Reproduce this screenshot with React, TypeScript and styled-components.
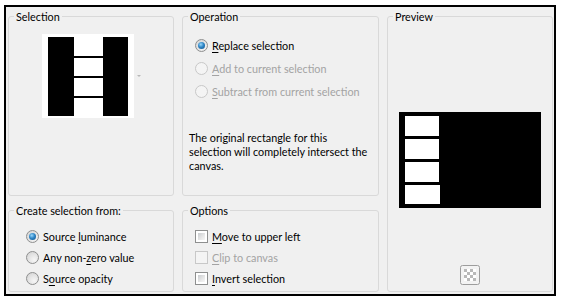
import React from 'react';
import styled, { createGlobalStyle, css } from 'styled-components';

const GlobalStyle = createGlobalStyle`
  html, body {
    margin: 0;
    padding: 0;
    background: #ffffff;
  }
  body {
    font-family: Lato, "Liberation Sans", sans-serif;
    font-size: 10.8px;
    color: #000;
  }
`;

const Frame = styled.div`
  box-sizing: border-box;
  margin: 5px 0 0 4px;
  width: 552px;
  height: 291px;
  border: 2px solid #000;
  background: #f0f0f0;
  padding: 2px 0 0 2px;
  display: grid;
  grid-template-columns: 166px 197px 166px;
  grid-template-rows: 187px 89px;
  column-gap: 8px;
  row-gap: 7px;
`;

const Group = styled.fieldset<{ $col: number; $row: string }>`
  grid-column: ${(p) => p.$col};
  grid-row: ${(p) => p.$row};
  margin: 0;
  padding: 0;
  min-width: 0;
  border: 1px solid #d9d9d9;
  border-radius: 3px;
  display: flex;
  flex-direction: column;
`;

const Title = styled.legend`
  margin-left: 5px;
  padding: 0 2px;
  line-height: 15px;
  font-size: 10.8px;
`;

const ThumbRow = styled.div`
  display: flex;
  align-items: center;
  padding: 10px 0 0 33px;
`;

const DropArrow = styled.span`
  margin-left: 3px;
  width: 0;
  height: 0;
  border-left: 2px solid transparent;
  border-right: 2px solid transparent;
  border-top: 2px solid #b8b8b8;
`;

const ChoiceList = styled.div<{ $top: number; $left: number; $row: number }>`
  display: flex;
  flex-direction: column;
  padding: ${(p) => `${p.$top}px 0 0 ${p.$left}px`};

  & > label {
    height: ${(p) => p.$row}px;
  }
`;

const Choice = styled.label<{ $disabled?: boolean }>`
  display: flex;
  align-items: center;
  gap: 4px;
  line-height: 15px;
  white-space: nowrap;
  color: ${(p) => (p.$disabled ? '#a3a3a3' : '#000')};
`;

const Radio = styled.span<{ $checked?: boolean; $disabled?: boolean }>`
  position: relative;
  box-sizing: border-box;
  width: 13px;
  height: 13px;
  flex: none;
  border-radius: 50%;
  border: 1px solid ${(p) => (p.$disabled ? '#c8c8c8' : '#8e8f8f')};
  background: ${(p) =>
    p.$disabled
      ? '#f4f4f4'
      : 'radial-gradient(circle at 65% 70%, #f6f6f6 0%, #e6e6e6 45%, #cfcfcf 100%)'};

  ${(p) =>
    p.$checked &&
    css`
      &::after {
        content: '';
        position: absolute;
        inset: 2px;
        border-radius: 50%;
        background: radial-gradient(circle at 40% 35%, #9ad8fb 0%, #2f86c6 45%, #0d4e86 100%);
      }
    `}
`;

const Check = styled.span<{ $disabled?: boolean }>`
  box-sizing: border-box;
  width: 13px;
  height: 13px;
  flex: none;
  padding: 2px;
  border: 1px solid ${(p) => (p.$disabled ? '#c8c8c8' : '#8e8f8f')};
  background: ${(p) =>
    p.$disabled
      ? '#f4f4f4'
      : 'linear-gradient(135deg, #c9cccf 0%, #e8e8e8 60%, #f7f7f7 100%) content-box, #fff'};
`;

const Key = styled.u`
  text-decoration: underline;
  text-underline-offset: 2px;
`;

const Note = styled.p`
  margin: 28px 0 0 6px;
  line-height: 14px;
  white-space: nowrap;
`;

const PreviewBody = styled.div`
  display: flex;
  flex-direction: column;
  align-items: center;
  padding-top: 88px;
`;

const TransparencyButton = styled.button`
  margin-top: 57px;
  padding: 0;
  width: 20px;
  height: 20px;
  border: none;
  background: none;
  display: block;
`;

const SelectionThumb = () => (
  <svg width="92" height="84" viewBox="0 0 92 84">
    <rect width="92" height="84" fill="#fff" />
    <rect x="6" y="3" width="26" height="79" fill="#000" />
    <rect x="61" y="3" width="25" height="79" fill="#000" />
    <rect x="32" y="22" width="29" height="2" fill="#000" />
    <rect x="32" y="42" width="29" height="2" fill="#000" />
    <rect x="32" y="62" width="29" height="2" fill="#000" />
  </svg>
);

const PreviewImage = () => (
  <svg width="142" height="96" viewBox="0 0 142 96">
    <rect width="142" height="96" fill="#000" />
    <rect x="6" y="4" width="34" height="20" fill="#fff" />
    <rect x="6" y="27" width="34" height="20" fill="#fff" />
    <rect x="6" y="50" width="34" height="20" fill="#fff" />
    <rect x="6" y="73" width="35" height="19" fill="#fff" />
  </svg>
);

const CheckerIcon = () => {
  const cells = [];
  for (let r = 0; r < 4; r++) {
    for (let c = 0; c < 4; c++) {
      if ((r + c) % 2 === 0) {
        cells.push(<rect key={`${r}-${c}`} x={4 + c * 3} y={4 + r * 3} width="3" height="3" fill="#b9b9b9" />);
      }
    }
  }
  return (
    <svg width="20" height="20" viewBox="0 0 20 20">
      <rect x="0.5" y="0.5" width="19" height="19" rx="2" fill="#f3f3f3" stroke="#9d9d9d" />
      <rect x="4" y="4" width="12" height="12" fill="#fff" />
      {cells}
    </svg>
  );
};

const App: React.FC = () => (
  <>
    <GlobalStyle />
    <Frame>
      <Group $col={1} $row="1">
        <Title>Selection</Title>
        <ThumbRow>
          <SelectionThumb />
          <DropArrow />
        </ThumbRow>
      </Group>

      <Group $col={2} $row="1">
        <Title>Operation</Title>
        <ChoiceList $top={10} $left={12} $row={23}>
          <Choice>
            <Radio $checked />
            <span>
              <Key>R</Key>eplace selection
            </span>
          </Choice>
          <Choice $disabled>
            <Radio $disabled />
            <span>
              <Key>A</Key>dd to current selection
            </span>
          </Choice>
          <Choice $disabled>
            <Radio $disabled />
            <span>
              <Key>S</Key>ubtract from current selection
            </span>
          </Choice>
        </ChoiceList>
        <Note>
          The original rectangle for this
          <br />
          selection will completely intersect the
          <br />
          canvas.
        </Note>
      </Group>

      <Group $col={3} $row="1 / span 2">
        <Title>Preview</Title>
        <PreviewBody>
          <PreviewImage />
          <TransparencyButton aria-label="Transparency">
            <CheckerIcon />
          </TransparencyButton>
        </PreviewBody>
      </Group>

      <Group $col={1} $row="2">
        <Title>Create selection from:</Title>
        <ChoiceList $top={8} $left={17} $row={21}>
          <Choice>
            <Radio $checked />
            <span>
              Source <Key>l</Key>uminance
            </span>
          </Choice>
          <Choice>
            <Radio />
            <span>
              Any non-<Key>z</Key>ero value
            </span>
          </Choice>
          <Choice>
            <Radio />
            <span>
              S<Key>o</Key>urce opacity
            </span>
          </Choice>
        </ChoiceList>
      </Group>

      <Group $col={2} $row="2">
        <Title>Options</Title>
        <ChoiceList $top={8} $left={12} $row={21}>
          <Choice>
            <Check />
            <span>
              <Key>M</Key>ove to upper left
            </span>
          </Choice>
          <Choice $disabled>
            <Check $disabled />
            <span>
              <Key>C</Key>lip to canvas
            </span>
          </Choice>
          <Choice>
            <Check />
            <span>
              <Key>I</Key>nvert selection
            </span>
          </Choice>
        </ChoiceList>
      </Group>
    </Frame>
  </>
);

export default App;
